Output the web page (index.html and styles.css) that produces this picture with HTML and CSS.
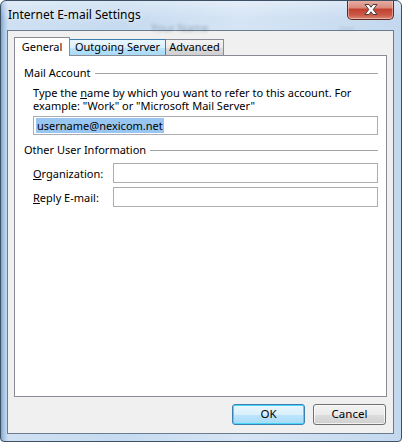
FILE: index.html
```html
<!DOCTYPE html>
<html>
<head>
<meta charset="utf-8">
<link rel="stylesheet" href="styles.css">
</head>
<body>
<div class="window">
  <div class="titlebar">
    <span class="title">Internet E-mail Settings</span>
    <span class="ghost">Your Name</span>
    <span class="ghost ghost2">___</span>
    <div class="close">
      <svg width="18" height="13" viewBox="0 0 18 13">
        <path d="M3 1.5 L7 1.5 L9 4.2 L11 1.5 L15 1.5 L11.2 6.5 L15 11.5 L11 11.5 L9 8.8 L7 11.5 L3 11.5 L6.8 6.5 Z" fill="#fff" stroke="#4a3f3f" stroke-width="1" stroke-linejoin="round"/>
      </svg>
    </div>
  </div>
  <div class="client">
    <div class="tabs">
      <div class="tab active">General</div>
      <div class="tab hover">Outgoing Server</div>
      <div class="tab adv">Advanced</div>
    </div>
    <div class="panel">
      <div class="group-head"><span>Mail Account</span><i class="rule"></i></div>
      <div class="indent">
        <p class="desc">Type the <u>n</u>ame by which you want to refer to this account. For example: "Work" or "Microsoft Mail Server"</p>
        <div class="input wide"><span class="sel">username@nexicom.net</span></div>
      </div>
      <div class="group-head second"><span>Other User Information</span><i class="rule"></i></div>
      <div class="indent rows">
        <div class="row"><label><u>O</u>rganization:</label><div class="input"></div></div>
        <div class="row"><label><u>R</u>eply E-mail:</label><div class="input"></div></div>
      </div>
    </div>
    <div class="buttons">
      <div class="btn default">OK</div>
      <div class="btn">Cancel</div>
    </div>
  </div>
</div>
</body>
</html>
```
FILE: styles.css
```css
* { box-sizing: border-box; }
html, body { margin: 0; padding: 0; }
body {
  width: 402px;
  height: 442px;
  font-family: "Noto Sans", "DejaVu Sans", sans-serif;
  font-size: 11px;
  color: #000;
  overflow: hidden;
  background: #fff;
}
.window {
  width: 402px;
  height: 442px;
  border: 1px solid #3e5064;
  border-radius: 6px 6px 4px 4px;
  background: linear-gradient(90deg, #7ea6cf 0px, #a9c6e6 3px, #cfe0f2 7px, #c6dbf0 30%, #d6e5f5 60%, #c3d8ee 100%);
  display: flex;
  flex-direction: column;
  overflow: hidden;
}
.titlebar {
  height: 29px;
  flex: none;
  position: relative;
  display: flex;
  align-items: center;
  padding-left: 7px;
  background: linear-gradient(180deg, rgba(255,255,255,0.35), rgba(255,255,255,0) 60%);
}
.title {
  font-size: 12px;
  color: #000;
  line-height: 14px;
  margin-top: -1px;
  text-shadow: 0 0 6px rgba(255,255,255,0.9);
}
.ghost {
  position: absolute;
  left: 150px;
  top: 19px;
  font-size: 11px;
  color: rgba(70,80,95,0.4);
  filter: blur(1.4px);
}
.ghost2 { left: 338px; top: 14px; }
.close {
  position: absolute;
  right: 7px;
  top: -1px;
  width: 47px;
  height: 20px;
  border: 1px solid #5b2a25;
  border-top: none;
  border-radius: 0 0 5px 5px;
  background: linear-gradient(180deg, #e8b2a6 0%, #d98b7c 40%, #c2412f 50%, #cc5a48 80%, #d98b7a 100%);
  box-shadow: inset 0 0 0 1px rgba(255,220,210,0.5);
  display: flex;
  align-items: center;
  justify-content: center;
}
.client {
  flex: none;
  height: 404px;
  margin: 0 7px 0 6px;
  border: 1px solid #6b7c90;
  background: #f0f0f0;
  display: flex;
  flex-direction: column;
  padding: 6px 6px 0 6px;
}
.tabs {
  display: flex;
  align-items: flex-end;
  height: 18px;
  position: relative;
  z-index: 2;
}
.tab {
  height: 16px;
  border: 1px solid #898c95;
  border-bottom: none;
  padding: 0;
  text-align: center;
  line-height: 14px;
  font-size: 11px;
  margin-left: -1px;
  background: linear-gradient(180deg, #f3f3f3 0%, #ebebeb 50%, #dddddd 51%, #cfcfcf 100%);
  color: #000;
}
.tab.hover {
  width: 97px;
  border-color: #3c7fb1;
  background: linear-gradient(180deg, #eaf6fd 0%, #d9f0fc 50%, #bee6fd 51%, #a7d9f5 100%);
  position: relative;
  z-index: 1;
}
.tab.adv { width: 59px; }
.tab.active {
  width: 56px;
  height: 19px;
  margin-left: 0;
  margin-bottom: -1px;
  background: #fff;
  padding-top: 1px;
  line-height: 15px;
  position: relative;
  z-index: 3;
}
.panel {
  height: 342px;
  border: 1px solid #898c95;
  background: #fff;
  padding: 10px 8px 0 9px;
  display: flex;
  flex-direction: column;
}
.group-head {
  display: flex;
  align-items: center;
  height: 14px;
  line-height: 14px;
}
.group-head .rule {
  flex: 1;
  height: 1px;
  background: #a3a3a3;
  margin-left: 4px;
}
.group-head.second { margin-top: 8px; }
.indent { padding-left: 9px; }
.desc {
  margin: 6px 0 0 0;
  line-height: 13px;
}
.input {
  height: 19px;
  border: 1px solid #abadb3;
  background: #fff;
  padding: 1px 0 0 2px;
  line-height: 15px;
}
.wide { margin-top: 4px; }
.sel {
  background: #99c6f0;
  color: #000;
  padding: 0 1px;
}
.rows { margin-top: 6px; display: flex; flex-direction: column; gap: 4px; }
.row { display: flex; align-items: center; }
.row label { width: 80px; flex: none; }
.row .input { flex: 1; height: 20px; }
.buttons {
  display: flex;
  justify-content: flex-end;
  gap: 8px;
  margin-top: 7px;
  padding-right: 1px;
}
.btn {
  width: 73px;
  height: 21px;
  border: 1px solid #707070;
  border-radius: 3px;
  background: linear-gradient(180deg, #f2f2f2 0%, #ebebeb 50%, #dddddd 51%, #cfcfcf 100%);
  box-shadow: inset 0 0 0 1px rgba(255,255,255,0.7);
  text-align: center;
  line-height: 18px;
  font-size: 11.5px;
}
.btn.default {
  border-color: #3c7fb1;
  background: linear-gradient(180deg, #eaf6fd 0%, #d9f0fc 50%, #bee6fd 51%, #a7d9f5 100%);
  box-shadow: inset 0 0 0 1px #48d6fb;
}
```
